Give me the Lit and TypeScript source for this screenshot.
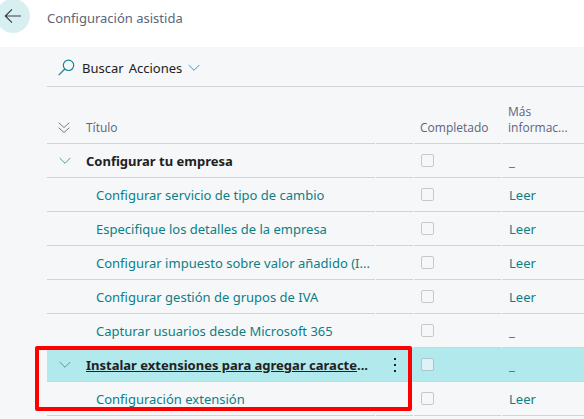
import { LitElement, html, css, svg, nothing } from "lit";
import { customElement, property } from "lit/decorators.js";
import { classMap } from "lit/directives/class-map.js";

interface SetupRow {
  title: string;
  info: string;
  group?: boolean;
  selected?: boolean;
}

const ROWS: SetupRow[] = [
  { title: "Configurar tu empresa", info: "_", group: true },
  { title: "Configurar servicio de tipo de cambio", info: "Leer" },
  { title: "Especifique los detalles de la empresa", info: "Leer" },
  { title: "Configurar impuesto sobre valor añadido (I...", info: "Leer" },
  { title: "Configurar gestión de grupos de IVA", info: "Leer" },
  { title: "Capturar usuarios desde Microsoft 365", info: "_" },
  { title: "Instalar extensiones para agregar caracte", info: "_", group: true, selected: true },
  { title: "Configuración extensión", info: "Leer" },
];

const chevron = html`<svg width="12" height="8" viewBox="0 0 12 8" fill="none" stroke="currentColor" aria-hidden="true">
  ${svg`<path d="M0.7 1 L6 6.3 L11.3 1" />`}
</svg>`;

@customElement("setup-table")
export class SetupTable extends LitElement {
  @property({ attribute: false }) rows: SetupRow[] = [];

  static styles = css`
    :host {
      display: block;
    }
    table {
      width: 100%;
      table-layout: fixed;
      border-collapse: collapse;
    }
    .col-menu {
      width: 38px;
    }
    .col-done {
      width: 88px;
    }
    .col-info {
      width: 82px;
    }
    th,
    td {
      box-sizing: border-box;
      padding: 0;
      text-align: left;
      white-space: nowrap;
      background: linear-gradient(#d0d4da, #d0d4da) left bottom / calc(100% - 1px) 1px no-repeat;
    }
    th:last-child,
    td:last-child {
      background-size: 100% 1px;
    }
    th {
      height: 57px;
      padding-bottom: 8px;
      vertical-align: bottom;
      font-family: "Open Sans", "Noto Sans", sans-serif;
      font-size: 12px;
      font-weight: 400;
      line-height: 16px;
      color: #5c6579;
    }
    td {
      height: 34px;
      line-height: 20px;
    }
    .done {
      padding-left: 6px;
    }
    td.done {
      padding-left: 7px;
    }
    .info {
      padding-left: 6px;
    }
    td.info {
      padding-left: 7px;
    }
    .line {
      display: flex;
      align-items: center;
    }
    .toggle {
      display: flex;
      flex: none;
      width: 39px;
      padding: 0 0 0 12px;
      border: 0;
      background: none;
      color: #4f9ca3;
    }
    .expand-all {
      padding-left: 11px;
      color: #707888;
    }
    .child {
      padding-left: 49px;
    }
    a {
      color: #0b7f86;
      text-decoration: none;
    }
    .group {
      color: #212121;
      font-weight: 700;
    }
    .selected {
      background: #b2e9ec;
    }
    .selected .group {
      text-decoration: underline;
    }
    .more-text {
      color: #212121;
      font-weight: 700;
    }
    .title {
      position: relative;
    }
    .highlight {
      position: absolute;
      z-index: 1;
      top: -2px;
      left: -12px;
      right: -36px;
      height: 57px;
      border: 4px solid #ff0000;
      border-radius: 2px;
      pointer-events: none;
    }
    .more {
      display: flex;
      width: 38px;
      justify-content: center;
      padding: 0;
      border: 0;
      background: none;
      color: #212121;
    }
    .check {
      display: block;
      appearance: none;
      width: 13px;
      height: 13px;
      margin: 0 0 2px;
      border: 1px solid #c8c8c8;
      border-radius: 2px;
      background: #f6f7f8;
    }
    .selected .check {
      border-color: #a9c6ca;
      background: #dff2f5;
    }
  `;

  private renderRow(row: SetupRow) {
    return html`<tr class=${classMap({ selected: !!row.selected })}>
      <td class="title">
        <div class=${classMap({ line: true, child: !row.group })}>
          ${row.group
            ? html`<button class="toggle" aria-label="Contraer">${chevron}</button>`
            : nothing}
          <a href="#" class=${classMap({ group: !!row.group })}>${row.title}</a>${row.selected
            ? html`<span class="more-text">...</span>`
            : nothing}
        </div>
        ${row.selected ? html`<div class="highlight"></div>` : nothing}
      </td>
      <td>
        ${row.selected
          ? html`<button class="more" aria-label="Más opciones">
              <svg width="4" height="16" viewBox="0 0 4 16" fill="currentColor" aria-hidden="true">
                <path d="M1 1h2v2H1zM1 7h2v2H1zM1 13h2v2H1z" />
              </svg>
            </button>`
          : nothing}
      </td>
      <td class="done"><input class="check" type="checkbox" aria-label=${"Completado: " + row.title} /></td>
      <td class="info"><a href="#">${row.info}</a></td>
    </tr>`;
  }

  render() {
    return html`<table>
      <colgroup>
        <col />
        <col class="col-menu" />
        <col class="col-done" />
        <col class="col-info" />
      </colgroup>
      <thead>
        <tr>
          <th scope="col">
            <div class="line">
              <button class="toggle expand-all" aria-label="Contraer todo">
                <svg width="12" height="12" viewBox="0 0 12 12" fill="none" stroke="currentColor" aria-hidden="true">
                  <path d="M0.7 0.7 L6 5.5 L11.3 0.7 M0.7 5.7 L6 10.5 L11.3 5.7" />
                </svg>
              </button>
              <span>Título</span>
            </div>
          </th>
          <th></th>
          <th scope="col" class="done">Completado</th>
          <th scope="col" class="info">Más<br />informac...</th>
        </tr>
      </thead>
      <tbody>
        ${this.rows.map((row) => this.renderRow(row))}
      </tbody>
    </table>`;
  }
}

@customElement("app-root")
export class AppRoot extends LitElement {
  static styles = css`
    :host {
      display: block;
      min-height: 100vh;
      overflow: hidden;
      background: #f6f7f9;
      font-family: "Noto Sans", "Open Sans", sans-serif;
      font-size: 13px;
      color: #212121;
    }
    header {
      display: flex;
      align-items: flex-start;
      height: 47px;
      background: #ffffff;
    }
    .back {
      display: flex;
      flex: none;
      align-items: center;
      justify-content: center;
      width: 34px;
      height: 34px;
      margin: -1px 17px 0 -4px;
      padding: 0;
      border: 0;
      border-radius: 50%;
      background: #d8eff1;
      color: #3a3f45;
    }
    h1 {
      margin: 8px 0 0;
      font-size: 13px;
      font-weight: 400;
      line-height: 20px;
      color: #5c6579;
    }
    main {
      padding-left: 47px;
    }
    .toolbar {
      display: flex;
      align-items: center;
      height: 40px;
      padding: 2px 0 0 11px;
      box-sizing: border-box;
      border-bottom: 1px solid #d0d4da;
    }
    .action {
      display: flex;
      align-items: center;
      gap: 6px;
      margin-right: 5px;
      padding: 0;
      border: 0;
      background: none;
      font: inherit;
      line-height: 20px;
      color: inherit;
    }
    .search svg {
      margin-right: 1px;
      color: #15858c;
    }
    .menu svg {
      color: #4b93bd;
    }
  `;

  render() {
    return html`
      <header>
        <button class="back" aria-label="Atrás">
          <svg width="18" height="16" viewBox="0 0 18 16" fill="none" stroke="currentColor" stroke-width="1.2" aria-hidden="true">
            <path d="M17 8H1.5M8 1.3L1.3 8L8 14.7" />
          </svg>
        </button>
        <h1>Configuración asistida</h1>
      </header>
      <main>
        <div class="toolbar">
          <button class="action search">
            <svg width="17" height="17" viewBox="0 0 17 17" fill="none" stroke="currentColor" stroke-width="1.2" aria-hidden="true">
              <circle cx="10.5" cy="6.3" r="5.2" />
              <path d="M6.8 10L0.7 16.2" />
            </svg>
            Buscar
          </button>
          <button class="action menu">Acciones ${chevron}</button>
        </div>
        <setup-table .rows=${ROWS}></setup-table>
      </main>
    `;
  }
}
